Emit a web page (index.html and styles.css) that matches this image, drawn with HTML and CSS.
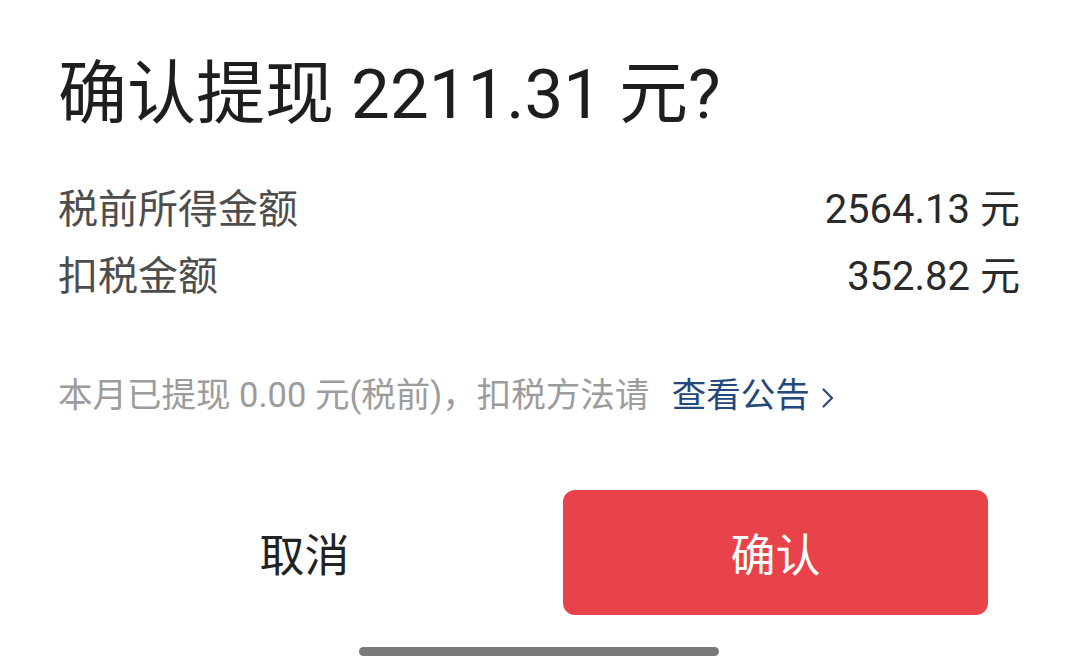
FILE: index.html
```html
<!DOCTYPE html>
<html lang="zh-CN">
<head>
<meta charset="utf-8">
<title>确认提现</title>
<link rel="stylesheet" href="styles.css">
</head>
<body>
<div class="dialog">
  <h1 class="title">确认提现 2211.31 元?</h1>
  <div class="rows">
    <div class="row"><span class="label">税前所得金额</span><span class="value">2564.13 元</span></div>
    <div class="row"><span class="label">扣税金额</span><span class="value">352.82 元</span></div>
  </div>
  <p class="note">本月已提现 0.00 元(税前)，扣税方法请 <a class="link">查看公告<svg class="chev" width="16" height="24" viewBox="0 0 16 24"><path d="M3.5 3.5 L12 12 L3.5 20.5" fill="none" stroke="#2a4a7c" stroke-width="2.2" stroke-linecap="round" stroke-linejoin="round"/></svg></a></p>
  <div class="actions">
    <button class="btn cancel">取消</button>
    <button class="btn confirm">确认</button>
  </div>
  <div class="home-bar"></div>
</div>
</body>
</html>
```

FILE: styles.css
```css
* { box-sizing: border-box; }
html, body {
  margin: 0;
  padding: 0;
  background: #ffffff;
}
body {
  width: 1080px;
  height: 662px;
  overflow: hidden;
  font-family: Roboto, "Noto Sans CJK SC", sans-serif;
}
.dialog {
  display: flex;
  flex-direction: column;
  height: 662px;
  padding: 55px 60px 0 58px;
}
.title {
  margin: 0;
  font-size: 69px;
  line-height: 80px;
  font-weight: 400;
  color: #1e1e1e;
  white-space: nowrap;
}
.rows {
  margin-top: 37px;
  display: flex;
  flex-direction: column;
}
.row {
  display: flex;
  justify-content: space-between;
  align-items: center;
  height: 67px;
  font-size: 40px;
}
.label { color: #4d4d4d; }
.value { color: #2a2a2a; }
.note {
  margin: 69px 0 0 0;
  font-size: 34.5px;
  line-height: 40px;
  color: #9c9c9c;
  white-space: nowrap;
}
.link {
  color: #23487c;
  margin-left: 14px;
}
.chev {
  margin-left: 10px;
  vertical-align: -3px;
}
.actions {
  display: flex;
  gap: 46px;
  margin: 75px 32px 0 34px;
}
.btn {
  flex: 1;
  height: 125px;
  border: none;
  border-radius: 12px;
  font-family: Roboto, "Noto Sans CJK SC", sans-serif;
  font-size: 45px;
  padding: 0;
}
.cancel {
  background: transparent;
  color: #222222;
}
.confirm {
  background: #e8434a;
  color: #ffffff;
}
.home-bar {
  align-self: center;
  width: 360px;
  height: 9px;
  border-radius: 5px;
  background: #7a7a7a;
  margin-top: 32px;
}
```
